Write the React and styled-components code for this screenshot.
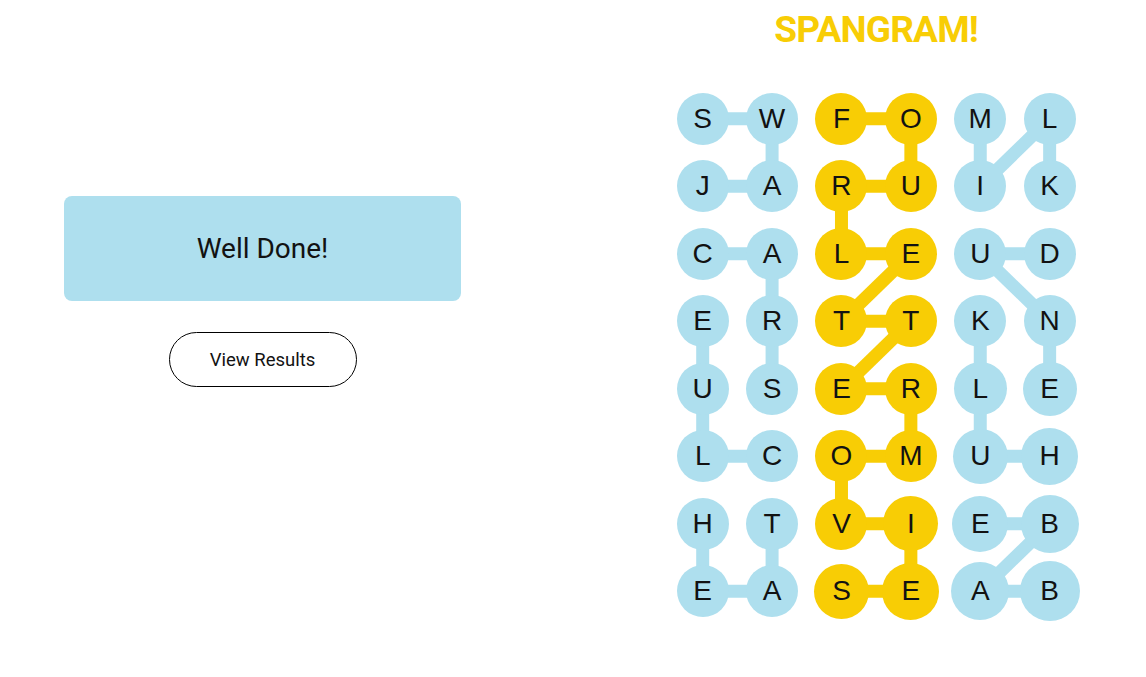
import React from "react";
import styled, { createGlobalStyle } from "styled-components";

const BLUE = "#aedfee";
const YELLOW = "#f8cd05";
const INK = "#121212";
const CELL_W = 69.4;
const CELL_H = 67.5;

const GlobalStyle = createGlobalStyle`
  html, body { margin: 0; padding: 0; background: #ffffff; }
  body { font-family: "Liberation Sans", Arial, sans-serif; color: ${INK}; }
`;

const Page = styled.div`
  display: flex;
  align-items: flex-start;
  width: 1146px;
  height: 677px;
  box-sizing: border-box;
  padding-left: 64px;
`;

const Side = styled.div`
  width: 397px;
  padding-top: 196px;
  display: flex;
  flex-direction: column;
  align-items: center;
  gap: 31px;
`;

const Banner = styled.div`
  width: 100%;
  height: 105px;
  border-radius: 8px;
  background: ${BLUE};
  display: flex;
  align-items: center;
  justify-content: center;
  font-family: Roboto, "Liberation Sans", sans-serif;
  font-size: 28px;
  color: ${INK};
`;

const PillButton = styled.button`
  width: 188px;
  height: 55px;
  border: 1px solid #000;
  border-radius: 28px;
  background: #fff;
  font-family: Roboto, "Liberation Sans", sans-serif;
  font-size: 18.5px;
  color: ${INK};
  cursor: pointer;
  padding: 0;
`;

const Main = styled.div`
  margin-left: 207px;
  display: flex;
  flex-direction: column;
  align-items: center;
`;

const Title = styled.h1`
  margin: 11px 0 37px;
  font-family: Roboto, "Liberation Sans", sans-serif;
  font-weight: 700;
  font-size: 37px;
  line-height: 37px;
  letter-spacing: -0.8px;
  color: ${YELLOW};
`;

const Board = styled.div`
  position: relative;
  display: grid;
  grid-template-columns: repeat(6, ${CELL_W}px);
  grid-template-rows: repeat(8, ${CELL_H}px);
`;

const Links = styled.svg`
  position: absolute;
  inset: 0;
  width: 100%;
  height: 100%;
  z-index: 0;
  pointer-events: none;
`;

const Cell = styled.div`
  position: relative;
  z-index: 1;
  display: flex;
  align-items: center;
  justify-content: center;
`;

const Dot = styled.div`
  flex-shrink: 0;
  width: ${(p) => p.$size}px;
  height: ${(p) => p.$size}px;
  border-radius: 50%;
  background: ${(p) => p.$color};
  display: flex;
  align-items: center;
  justify-content: center;
  font-family: "Liberation Sans", Arial, sans-serif;
  font-size: 28px;
  color: ${INK};
`;

const ROWS = [
  "SWFOML",
  "JARUIK",
  "CALEUD",
  "ERTTKN",
  "USERLE",
  "LCOMUH",
  "HTVIEB",
  "EASEAB",
];

const SIZES = {
  "4,4": 53,
  "4,5": 54,
  "5,4": 55,
  "5,5": 57,
  "6,4": 56,
  "6,5": 58,
  "7,4": 58,
  "7,5": 60,
  "7,2": 55,
  "7,3": 57,
  "6,3": 55,
};

const colorOf = (c) => (c === 2 || c === 3 ? YELLOW : BLUE);

const PATHS = [
  [[0, 0], [0, 1], [1, 1], [1, 0]],
  [[2, 0], [2, 1], [3, 1], [4, 1]],
  [[3, 0], [4, 0], [5, 0], [5, 1]],
  [[6, 0], [7, 0], [7, 1], [6, 1]],
  [[0, 4], [1, 4], [0, 5], [1, 5]],
  [[2, 5], [2, 4], [3, 5], [4, 5]],
  [[3, 4], [4, 4], [5, 4], [5, 5]],
  [[6, 4], [6, 5], [7, 4], [7, 5]],
  [
    [0, 2], [0, 3], [1, 3], [1, 2], [2, 2], [2, 3], [3, 2], [3, 3],
    [4, 2], [4, 3], [5, 3], [5, 2], [6, 2], [6, 3], [7, 3], [7, 2],
  ],
];

const cx = (c) => c * CELL_W + CELL_W / 2;
const cy = (r) => r * CELL_H + CELL_H / 2;

export default function App() {
  const W = CELL_W * 6;
  const H = CELL_H * 8;
  return (
    <>
      <GlobalStyle />
      <Page>
        <Side>
          <Banner>Well Done!</Banner>
          <PillButton type="button">View Results</PillButton>
        </Side>
        <Main>
          <Title>SPANGRAM!</Title>
          <Board>
            <Links viewBox={`0 0 ${W} ${H}`}>
              {PATHS.map((path, i) =>
                path.slice(1).map(([r, c], j) => {
                  const [pr, pc] = path[j];
                  return (
                    <line
                      key={`${i}-${j}`}
                      x1={cx(pc)}
                      y1={cy(pr)}
                      x2={cx(c)}
                      y2={cy(r)}
                      stroke={colorOf(c)}
                      strokeWidth={13}
                    />
                  );
                })
              )}
            </Links>
            {ROWS.map((row, r) =>
              row.split("").map((ch, c) => (
                <Cell key={`${r}-${c}`}>
                  <Dot $size={SIZES[`${r},${c}`] || 52} $color={colorOf(c)}>
                    {ch}
                  </Dot>
                </Cell>
              ))
            )}
          </Board>
        </Main>
      </Page>
    </>
  );
}
